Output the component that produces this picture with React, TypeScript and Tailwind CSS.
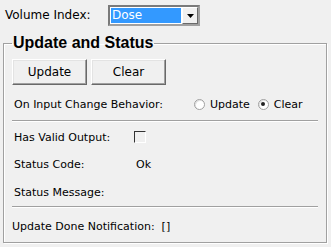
import React from "react";

function Radio({ checked, label }: { checked?: boolean; label: string }) {
  return (
    <div className="flex items-center">
      <span className="w-[11px] h-[11px] rounded-full border border-[#a0a0a0] bg-white shadow-[inset_1px_1px_0_#e3e3e3] flex items-center justify-center">
        {checked && <span className="w-[4px] h-[4px] rounded-full bg-[#222]" />}
      </span>
      <span className="ml-[5px]">{label}</span>
    </div>
  );
}

function Separator() {
  return <div className="mx-[8px] h-[2px] border-t border-[#a0a0a0] border-b border-b-white" />;
}

export default function App() {
  return (
    <main
      className="w-[331px] h-[247px] bg-[#f0f0f0] text-black text-[11px] leading-[15px] overflow-hidden"
      style={{ fontFamily: '"DejaVu Sans", Tahoma, sans-serif' }}
    >
      {/* Volume index */}
      <div className="flex items-center pt-[5px] pl-[5px] h-[26px]">
        <span className="w-[103px] text-[12px]">Volume Index:</span>
        <div className="w-[92px] h-[21px] flex border-2 border-[#7a7a7a] border-r-[#a0a0a0] border-b-[#a0a0a0] bg-white">
          <div className="flex-1 m-[1px] bg-[#3399ff] text-white text-[12px] pl-[1px] leading-[15px]">Dose</div>
          <div className="w-[16px] bg-[#f0f0f0] border border-white border-r-[#696969] border-b-[#696969] flex items-center justify-center">
            <svg width="7" height="4" viewBox="0 0 7 4">
              <polygon points="0,0 7,0 3.5,4" fill="#000" />
            </svg>
          </div>
        </div>
      </div>

      {/* Update and Status */}
      <fieldset className="mx-[3px] mt-[8px] w-[324px] h-[209px] border border-[#a0a0a0] shadow-[inset_1px_1px_0_#fff,1px_1px_0_#fff] px-0 pb-0">
        <legend
          className="ml-[8px] px-[1px] text-[16px] leading-[18px] font-bold"
          style={{ fontFamily: '"Liberation Sans", Arial, sans-serif' }}
        >
          Update and Status
        </legend>

        <div className="flex gap-[4px] pl-[8px] mt-[7px]">
          {["Update", "Clear"].map((t) => (
            <button
              key={t}
              className="w-[75px] h-[26px] bg-[#f0f0f0] text-[12px] border border-white border-r-[#696969] border-b-[#696969] shadow-[inset_-1px_-1px_0_#a0a0a0,inset_1px_1px_0_#e3e3e3] flex items-center justify-center"
            >
              {t}
            </button>
          ))}
        </div>

        <div className="flex items-center pl-[10px] h-[18px] mt-[10px]">
          <span className="w-[180px]">On Input Change Behavior:</span>
          <Radio label="Update" />
          <div className="w-[8px]" />
          <Radio checked label="Clear" />
        </div>

        <div className="mt-[7px]">
          <Separator />
        </div>

        <div className="flex items-center pl-[10px] h-[18px] mt-[6px]">
          <span className="w-[120px]">Has Valid Output:</span>
          <span className="w-[12px] h-[12px] border border-[#333] border-r-white border-b-white bg-[#f0f0f0]" />
        </div>

        <div className="flex items-center pl-[10px] h-[18px] mt-[9px]">
          <span className="w-[122px]">Status Code:</span>
          <span>Ok</span>
        </div>

        <div className="flex items-center pl-[10px] h-[18px] mt-[10px]">
          <span>Status Message:</span>
        </div>

        <div className="mt-[5px]">
          <Separator />
        </div>

        <div className="flex items-center pl-[8px] h-[18px] mt-[9px]">
          <span>Update Done Notification:&nbsp;&nbsp;[]</span>
        </div>
      </fieldset>
    </main>
  );
}
